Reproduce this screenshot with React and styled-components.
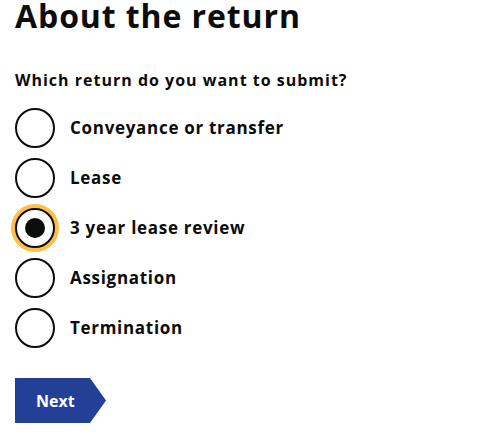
import React, { useState } from "react";
import styled, { createGlobalStyle } from "styled-components";

const Global = createGlobalStyle`
  html, body { margin: 0; padding: 0; background: #fff; }
  body { font-family: "Open Sans", "Lato", sans-serif; color: #0b0c0c; }
  * { box-sizing: border-box; }
`;

const Page = styled.main`
  padding: 0 15px;
`;

const Title = styled.h1`
  margin: 0;
  font-size: 32px;
  line-height: 32px;
  font-weight: 700;
  letter-spacing: 0.9px;
`;

const Fieldset = styled.fieldset`
  border: 0;
  margin: 0;
  padding: 0;
  margin-top: 38px;
`;

const Legend = styled.legend`
  padding: 0;
  font-size: 16px;
  line-height: 20px;
  font-weight: 700;
  letter-spacing: 1px;
  margin-bottom: 18px;
`;

const Options = styled.div`
  display: flex;
  flex-direction: column;
  gap: 10px;
`;

const Option = styled.label`
  display: flex;
  align-items: center;
  gap: 15px;
  cursor: pointer;
`;

const Circle = styled.span`
  flex: none;
  width: 40px;
  height: 40px;
  border-radius: 50%;
  border: 2px solid #0b0c0c;
  background: #fff;
  display: flex;
  align-items: center;
  justify-content: center;
  box-shadow: ${(p) => (p.$focused ? "0 0 0 4px #ffbf47" : "none")};
`;

const Dot = styled.span`
  width: 20px;
  height: 20px;
  border-radius: 50%;
  background: #0b0c0c;
`;

const Hidden = styled.input`
  position: absolute;
  opacity: 0;
  width: 0;
  height: 0;
`;

const LabelText = styled.span`
  font-size: 17px;
  font-weight: 700;
  line-height: 22px;
  letter-spacing: 0.7px;
`;

const NextButton = styled.button`
  margin-top: 30px;
  display: block;
  width: 91px;
  height: 45px;
  border: 0;
  padding: 0 0 0 21px;
  text-align: left;
  background: #233f96;
  color: #fff;
  font-family: "Open Sans", sans-serif;
  font-size: 16px;
  font-weight: 700;
  clip-path: polygon(0 0, calc(100% - 16px) 0, 100% 50%, calc(100% - 16px) 100%, 0 100%);
  cursor: pointer;
`;

const options = [
  "Conveyance or transfer",
  "Lease",
  "3 year lease review",
  "Assignation",
  "Termination",
];

export default function App() {
  const [value, setValue] = useState(2);
  return (
    <>
      <Global />
      <Page>
        <Title>About the return</Title>
        <Fieldset>
          <Legend>Which return do you want to submit?</Legend>
          <Options>
            {options.map((o, i) => (
              <Option key={o}>
                <Hidden type="radio" name="ret" checked={value === i} onChange={() => setValue(i)} />
                <Circle $focused={value === i}>{value === i && <Dot />}</Circle>
                <LabelText>{o}</LabelText>
              </Option>
            ))}
          </Options>
        </Fieldset>
        <NextButton>Next</NextButton>
      </Page>
    </>
  );
}
